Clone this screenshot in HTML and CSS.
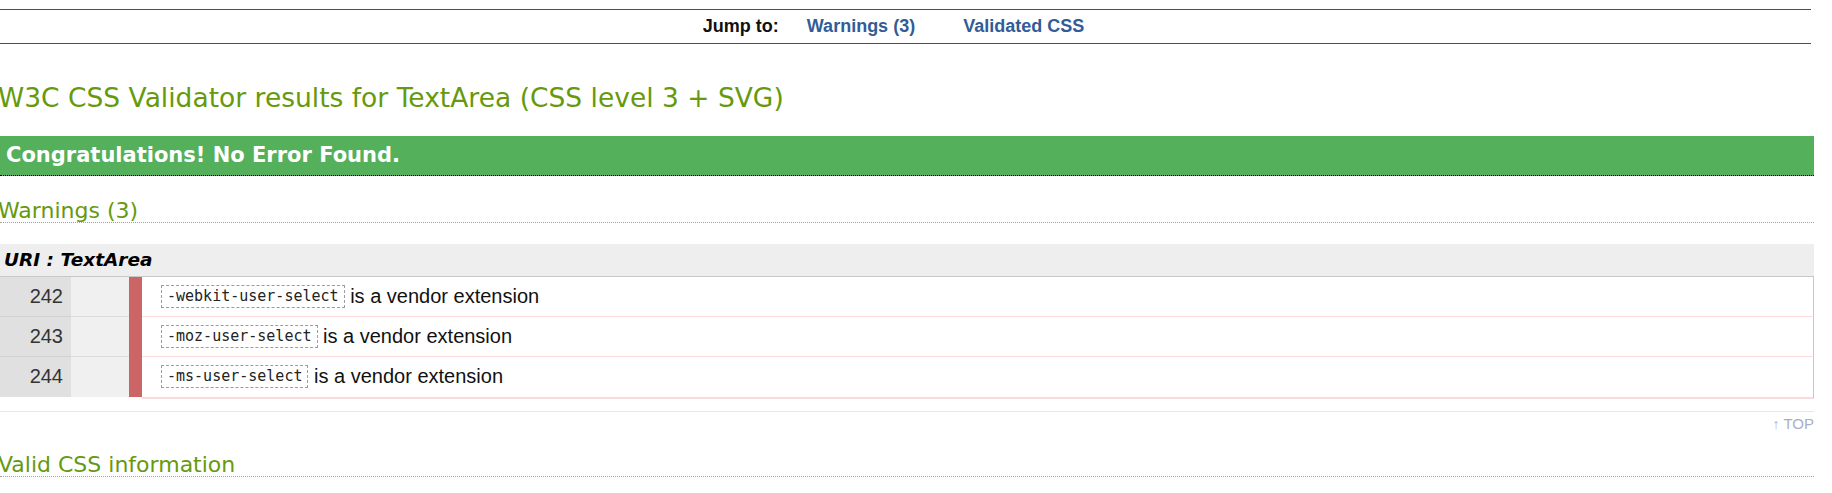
FILE: index.html
```html
<!DOCTYPE html>
<html lang="en">
<head>
<meta charset="utf-8">
<title>W3C CSS Validator results for TextArea (CSS level 3 + SVG)</title>
<link rel="stylesheet" href="styles.css">
</head>
<body>
<div class="page">
  <nav class="jumpbar">
    <span class="jump-label">Jump to:</span>
    <a class="jump-link first" href="#warnings">Warnings (3)</a>
    <a class="jump-link" href="#css">Validated CSS</a>
  </nav>

  <h1 class="title">W3C CSS Validator results for TextArea (CSS level 3 + SVG)</h1>

  <div class="congrats">Congratulations! No Error Found.</div>

  <h2 class="section-title" id="warnings">Warnings (3)</h2>

  <div class="results">
    <div class="uri-head">URI : TextArea</div>
    <div class="row">
      <div class="num">242</div>
      <div class="spacer"></div>
      <div class="bar"></div>
      <div class="msg"><code class="prop">-webkit-user-select</code> is a vendor extension</div>
    </div>
    <div class="row">
      <div class="num">243</div>
      <div class="spacer"></div>
      <div class="bar"></div>
      <div class="msg"><code class="prop">-moz-user-select</code> is a vendor extension</div>
    </div>
    <div class="row last">
      <div class="num">244</div>
      <div class="spacer"></div>
      <div class="bar"></div>
      <div class="msg"><code class="prop">-ms-user-select</code> is a vendor extension</div>
    </div>
  </div>

  <div class="top-link"><a href="#"><span class="arrow">&#8593;</span> TOP</a></div>

  <h2 class="section-title" id="css">Valid CSS information</h2>
</div>
</body>
</html>
```

FILE: styles.css
```css
html, body {
  margin: 0;
  padding: 0;
  background: #ffffff;
}

body {
  font-family: "Liberation Sans", Arial, sans-serif;
  color: #000;
  overflow: hidden;
}

.page {
  width: 1814px;
}

/* Jump bar */
.jumpbar {
  margin-top: 9px;
  width: 1787px;
  height: 33px;
  padding-right: 24px;
  border-top: 1px solid #1f5a8c;
  border-bottom: 1px solid #1f5a8c;
  display: flex;
  justify-content: center;
  align-items: center;
  font-family: "Liberation Sans", Arial, sans-serif;
  font-weight: bold;
  font-size: 18px;
}

.jump-label {
  color: #111;
  margin-right: 28px;
}

.jump-link {
  color: #325c97;
  text-decoration: none;
}

.jump-link.first {
  margin-right: 48px;
}

/* Title */
.title {
  margin: 38px 0 0 -2px;
  font-family: "DejaVu Sans", Verdana, sans-serif;
  font-weight: normal;
  font-size: 26.5px;
  line-height: 32px;
  color: #669a0c;
}

/* Green banner */
.congrats {
  margin-top: 22px;
  height: 39px;
  line-height: 39px;
  padding-left: 6px;
  background: #54b05b;
  border-bottom: 1px dotted #000;
  color: #fff;
  font-family: "DejaVu Sans", Verdana, sans-serif;
  font-weight: bold;
  font-size: 21px;
}

/* Section headings */
.section-title {
  margin: 24px 0 0 0;
  padding-left: 0;
  text-indent: -2px;
  font-family: "DejaVu Sans", Verdana, sans-serif;
  font-weight: normal;
  font-size: 22px;
  line-height: 22px;
  color: #669a0c;
  border-bottom: 1px dotted #a3a38c;
}

/* Results table */
.results {
  margin-top: 21px;
}

.uri-head {
  height: 32px;
  line-height: 32px;
  padding-left: 4px;
  background: #eeeeee;
  border-bottom: 1px solid #c8c8c8;
  font-family: "DejaVu Sans", Verdana, sans-serif;
  font-weight: bold;
  font-style: italic;
  font-size: 18.5px;
  color: #000;
}

.row {
  display: flex;
  height: 40px;
}

.num {
  width: 63px;
  padding-right: 8px;
  background: #e0e0e0;
  border-bottom: 1px solid #d2d2d2;
  text-align: right;
  line-height: 39px;
  font-size: 20px;
  color: #333;
}

.spacer {
  width: 58px;
  background: #f0f0f0;
  border-bottom: 1px solid #dcdcdc;
}

.bar {
  width: 13px;
  background: #cc6565;
}

.msg {
  flex: 1;
  display: flex;
  align-items: center;
  padding-left: 19px;
  border-bottom: 1px solid #fadcdc;
  border-right: 1px solid #c8c8c8;
  font-size: 20px;
  color: #111;
  white-space: pre;
}

.row.last .num,
.row.last .spacer {
  border-bottom: none;
}

.row.last .msg {
  border-bottom: 2px solid #fbdada;
  height: 42px;
  box-sizing: border-box;
  align-self: flex-start;
  padding-bottom: 1px;
}

.prop {
  font-family: "DejaVu Sans Mono", "Liberation Mono", monospace;
  font-size: 15px;
  line-height: 19px;
  padding: 1px 5px;
  border: 1px dashed #9c9c9c;
  color: #222;
}

/* Back to top */
.top-link {
  margin-top: 14px;
  border-top: 1px solid #e6e6ef;
  text-align: right;
  font-size: 15px;
  line-height: 20px;
  padding-top: 2px;
}

.top-link a {
  color: #a8afc4;
  text-decoration: none;
}

.top-link .arrow {
  font-size: 14px;
}

.section-title#css {
  margin-top: 20px;
}
```
